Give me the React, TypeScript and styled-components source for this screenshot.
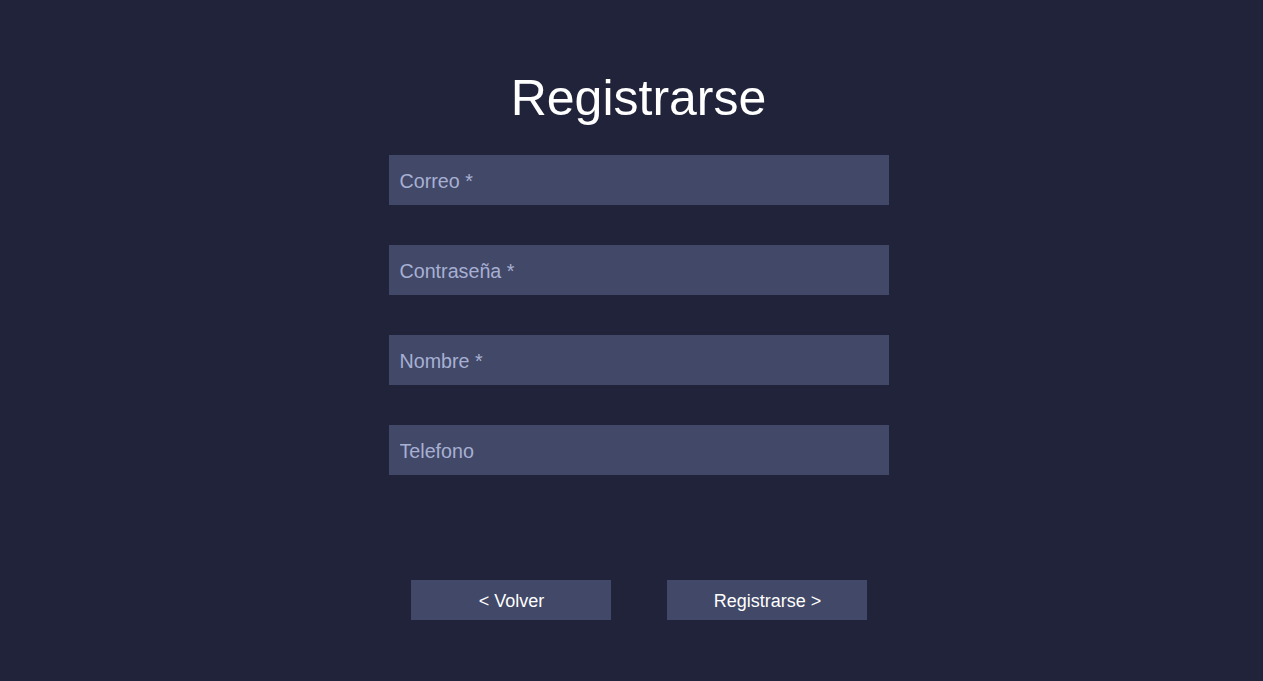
import styled, { createGlobalStyle } from 'styled-components';

const GlobalStyle = createGlobalStyle`
  html, body {
    margin: 0;
    padding: 0;
    background-color: #20233a;
    font-family: 'Liberation Sans', Arial, sans-serif;
  }
`;

const fields = [
  { name: 'correo', placeholder: 'Correo *', type: 'email' },
  { name: 'password', placeholder: 'Contraseña *', type: 'password' },
  { name: 'nombre', placeholder: 'Nombre *', type: 'text' },
  { name: 'telefono', placeholder: 'Telefono', type: 'tel' },
];

const App = () => {
  return (
    <>
      <GlobalStyle />
      <Page>
        <Title>Registrarse</Title>
        <Form onSubmit={(e) => e.preventDefault()}>
          {fields.map((f) => (
            <Input key={f.name} name={f.name} type={f.type} placeholder={f.placeholder} />
          ))}
          <Actions>
            <Button type="button">&lt; Volver</Button>
            <Button type="submit">Registrarse &gt;</Button>
          </Actions>
        </Form>
      </Page>
    </>
  );
};

const Page = styled.div`
  min-height: 681px;
  box-sizing: border-box;
  padding: 70px 0 0 14px;
  display: flex;
  flex-direction: column;
  align-items: center;
`;

const Title = styled.h1`
  margin: 0;
  font-size: 50px;
  font-weight: 400;
  line-height: 56px;
  color: #ffffff;
`;

const Form = styled.form`
  margin-top: 29px;
  width: 500px;
  display: flex;
  flex-direction: column;
  gap: 40px;
`;

const Input = styled.input`
  box-sizing: border-box;
  width: 100%;
  height: 50px;
  border: none;
  outline: none;
  padding: 2px 11px 0;
  background-color: #424867;
  color: #ffffff;
  font-family: 'Liberation Sans', Arial, sans-serif;
  font-size: 19.7px;

  &::placeholder {
    color: #a7b0d4;
  }
`;

const Actions = styled.div`
  margin-top: 65px;
  display: flex;
  justify-content: center;
  gap: 56px;
`;

const Button = styled.button`
  width: 200px;
  height: 40px;
  border: none;
  padding: 2px 0 0 2px;
  background-color: #424867;
  color: #ffffff;
  font-family: 'Liberation Sans', Arial, sans-serif;
  font-size: 18px;
  cursor: pointer;
`;

export default App;
